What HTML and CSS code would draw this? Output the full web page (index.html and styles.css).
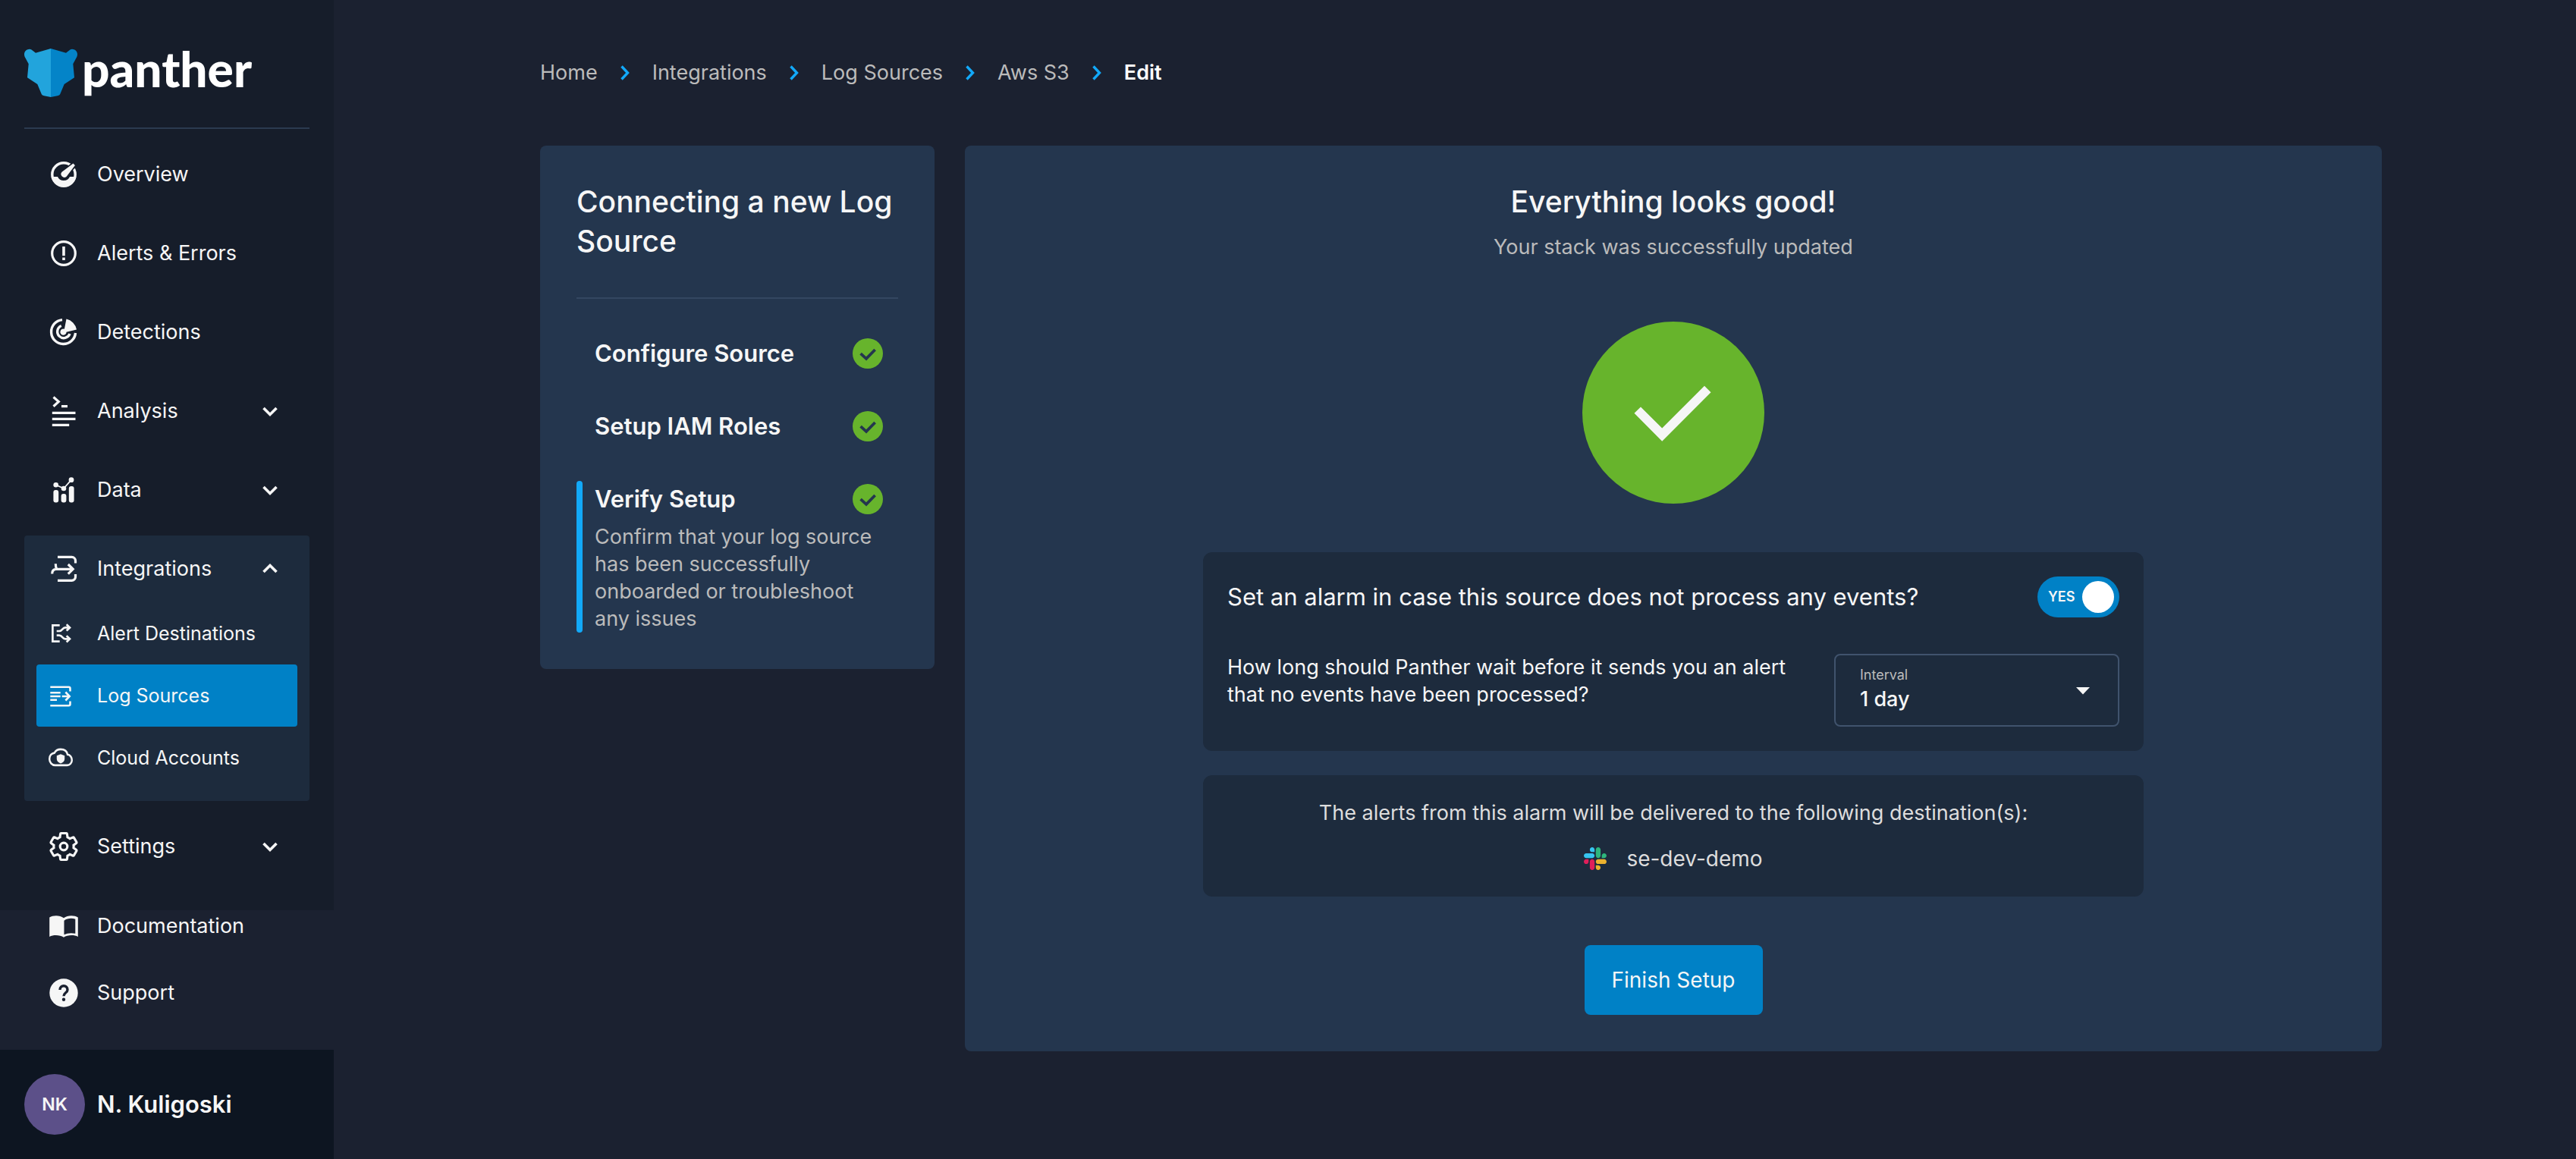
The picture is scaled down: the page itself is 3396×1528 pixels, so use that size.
FILE: index.html
```html
<!DOCTYPE html>
<html lang="en">
<head>
<meta charset="utf-8">
<meta name="viewport" content="width=device-width, initial-scale=1">
<title>Edit AWS S3 Log Source - Panther</title>
<link rel="stylesheet" href="styles.css">
</head>
<body>
<svg class="defs" aria-hidden="true">
  <symbol id="chevron" viewBox="0 0 24 24"><path d="M3.500 8 12 16.500 20.500 8" fill="none" stroke="currentColor" stroke-width="3.600"/></symbol>
  <symbol id="crumb" viewBox="0 0 14 20"><path d="M2.500 1.500 10.500 10 2.500 18.500" fill="none" stroke="currentColor" stroke-width="3.400"/></symbol>
  <symbol id="done" viewBox="0 0 40 40"><circle cx="20" cy="20" r="20" fill="#67b42c"/><path d="M10.600 20.200 18 26.800 29.600 15" fill="none" stroke="#24364e" stroke-width="3.800"/></symbol>
</svg>
<div class="app">
  <aside class="sidebar">
    <div class="sidebar-main">
      <a class="logo" href="#">
        <svg width="70" height="64" viewBox="0 0 70 64" aria-hidden="true">
          <path fill="#22a4dc" d="M35 0 15 5.700 9.500 1.500C6-.6 0 2.500 0 7.500c0 2 .5 3.200 1.400 4.800L5.700 20.300 4 38.300 17.300 47l5.200 12.500c.6 1.500 1.300 2.400 3.500 2.700L35 64z"/>
          <path fill="#0484c8" d="M35 0l20 5.700 5.500-4.200C64-.6 70 2.500 70 7.500c0 2-.5 3.200-1.400 4.800L64.300 20.300 66 38.300 52.700 47l-5.200 12.500c-.6 1.500-1.300 2.400-3.500 2.700L35 64z"/>
        </svg>
        <span>panther</span>
      </a>
      <nav class="nav" aria-label="Main">
        <a class="nav-item" href="#">
          <svg class="icon" viewBox="0 0 48 48"><circle cx="24" cy="24" r="15.200" fill="none" stroke="currentColor" stroke-width="3.400"/><path fill="currentColor" d="M7.500 27H16a8.500 7.500 0 0 0 16 0h8.500a17 17 0 0 1-33 0z"/><path d="M26 22 41 8" stroke="#161d2a" stroke-width="8"/><path fill="currentColor" d="M21.500 20.800 36.500 9.500l2.400 2.400-11.400 15a4.300 4.300 0 0 1-6-6.100z"/></svg>
          <span>Overview</span>
        </a>
        <a class="nav-item" href="#">
          <svg class="icon" viewBox="0 0 48 48"><circle cx="24" cy="24" r="15.300" fill="none" stroke="currentColor" stroke-width="3.200"/><path d="M24 15v12.200M24 29.600V33" stroke="currentColor" stroke-width="3.600"/></svg>
          <span>Alerts &amp; Errors</span>
        </a>
        <a class="nav-item" href="#">
          <svg class="icon" viewBox="0 0 48 48"><g fill="none" stroke="currentColor" stroke-width="3.400"><path d="M22 7.600A16 16 0 1 0 39.500 25"/><path d="M20.800 15.500A8.400 8.400 0 1 0 32 26"/></g><path fill="currentColor" d="M27.500 6.500A18 18 0 0 1 41 20.500L27.600 23.700a4.100 4.100 0 1 1-2.700-3.900z"/></svg>
          <span>Detections</span>
        </a>
        <button class="nav-item" type="button" aria-expanded="false">
          <svg class="icon" viewBox="0 0 48 48"><path d="M10.500 5.500 17.300 11.500 10.500 17.700M21 17.600h8M8.800 26.300h30.700M8.800 34.300h30.700M8.800 42.300h22.400" fill="none" stroke="currentColor" stroke-width="3.200"/></svg>
          <span>Analysis</span>
          <svg class="caret" viewBox="0 0 24 24"><use href="#chevron"/></svg>
        </button>
        <button class="nav-item" type="button" aria-expanded="false">
          <svg class="icon" viewBox="0 0 48 48"><path d="M13.700 17.300 24 22 34 10.700" fill="none" stroke="currentColor" stroke-width="1.800"/><g fill="currentColor"><circle cx="13.700" cy="17.300" r="3.300"/><circle cx="24" cy="22" r="3.300"/><circle cx="34" cy="10.700" r="3.400"/><rect x="10.400" y="24" width="6.800" height="16.500" rx="3"/><rect x="20.600" y="29" width="6.800" height="11.500" rx="3"/><rect x="30.800" y="19" width="6.800" height="21.500" rx="3"/></g></svg>
          <span>Data</span>
          <svg class="caret" viewBox="0 0 24 24"><use href="#chevron"/></svg>
        </button>
        <div class="nav-group">
          <button class="nav-item" type="button" aria-expanded="true">
            <svg class="icon" viewBox="0 0 48 48"><path d="M16 8.300h18.500a5 5 0 0 1 5 5v3.300M16 39.300h18.500a5 5 0 0 0 5-5V31M8.700 30.500c0-4 1.500-6.200 5.500-6.200H36M13.300 17.300c0 3 .2 5 1.500 7M29.800 18l6.400 6.300-6.400 6.400" fill="none" stroke="currentColor" stroke-width="3.200"/></svg>
            <span>Integrations</span>
            <svg class="caret caret-up" viewBox="0 0 24 24"><use href="#chevron"/></svg>
          </button>
          <a class="sub-item" href="#">
            <svg class="icon" viewBox="0 0 48 48"><path d="M22.700 13.300H13.400V34.700h9.300M18.700 21H22c4.500 0 4-4.600 8-4.600h6M18.700 26.700H22c4.500 0 4 4.600 8 4.600h6M31.700 12.300l4.300 4.100-4.300 4.100M31.700 27.200l4.300 4.100-4.300 4.100" fill="none" stroke="currentColor" stroke-width="2.700"/></svg>
            <span>Alert Destinations</span>
          </a>
          <a class="sub-item sub-item-active" href="#" aria-current="page">
            <svg class="icon" viewBox="0 0 48 48"><path d="M10.300 12.800h24.200a2 2 0 0 1 2 2v3.700M10.300 37.200h24.200a2 2 0 0 0 2-2v-3.700M10.300 20.300h13.400M10.300 25h13.400M10.300 29.700H19M25.700 25H36M30.400 19.500l5.300 5.500-5.300 5.500" fill="none" stroke="currentColor" stroke-width="2.600"/></svg>
            <span>Log Sources</span>
          </a>
          <a class="sub-item" href="#">
            <svg class="icon" viewBox="0 0 48 48"><path transform="translate(9.200 6.200) scale(1.233 1.350)" d="M19.350 10.040C18.670 6.590 15.640 5 12 5 9.110 5 6.600 6.240 5.350 8.440 2.340 8.760 0 10.910 0 14.500c0 3.310 2.690 6 6 6h13c2.760 0 5-2.240 5-5 0-2.640-2.050-5.280-4.650-5.460z" fill="none" stroke="currentColor" stroke-width="2"/><path fill="currentColor" d="M24 19.300l5.200 2v4.200c0 3-2.200 5-5.200 6.100-3-1.100-5.200-3.100-5.200-6.100v-4.200z"/></svg>
            <span>Cloud Accounts</span>
          </a>
        </div>
        <button class="nav-item" type="button" aria-expanded="false">
          <svg class="icon" viewBox="0 0 48 48"><path transform="translate(3 3) scale(1.750)" fill="none" stroke="currentColor" stroke-width="1.800" d="M19.430 12.980c.04-.32.07-.64.07-.98 0-.34-.03-.66-.07-.98l2.110-1.650c.19-.15.24-.42.12-.64l-2-3.460c-.09-.16-.26-.25-.44-.25-.06 0-.12.010-.17.030l-2.490 1c-.52-.4-1.080-.73-1.690-.98l-.38-2.650C14.460 2.180 14.250 2 14 2h-4c-.25 0-.46.18-.49.42l-.38 2.650c-.61.25-1.170.59-1.690.98l-2.490-1c-.06-.02-.12-.03-.18-.03-.17 0-.34.09-.43.25l-2 3.460c-.13.22-.07.49.12.64l2.110 1.650c-.04.32-.07.65-.07.98 0 .33.030.66.070.98l-2.110 1.650c-.19.15-.24.42-.12.64l2 3.460c.09.16.26.25.44.25.06 0 .12-.01.17-.03l2.490-1c.52.4 1.080.73 1.690.98l.38 2.650c.03.24.24.42.49.42h4c.25 0 .46-.18.49-.42l.38-2.650c.61-.25 1.170-.59 1.690-.98l2.490 1c.06.020.12.030.18.030.17 0 .34-.09.43-.25l2-3.460c.12-.22.07-.49-.12-.64z"/><circle cx="24" cy="24" r="4.800" fill="none" stroke="currentColor" stroke-width="3.200"/></svg>
          <span>Settings</span>
          <svg class="caret" viewBox="0 0 24 24"><use href="#chevron"/></svg>
        </button>
      </nav>
    </div>
    <nav class="help" aria-label="Help">
      <a class="nav-item help-item" href="#">
        <svg class="icon" viewBox="0 0 48 48"><path fill="currentColor" fill-rule="evenodd" d="M24 13.200C19 9.400 10 9.400 5.200 12.500V38C10 35.300 19 35.300 24 38.800 29 35.300 38 35.300 42.800 38V12.500C38 9.400 29 9.400 24 13.200zM24.500 16.700C29 13.400 35 13.300 39.300 14.800V33.800C34.500 32.600 28.500 33 24.500 35.300z"/></svg>
        <span>Documentation</span>
      </a>
      <a class="nav-item help-item" href="#">
        <svg class="icon" viewBox="0 0 48 48"><circle cx="24" cy="24" r="18.700" fill="currentColor"/><path d="M19 20c0-7 10-7 10 0 0 3.700-5 4-5 8.200" fill="none" stroke="#1b2130" stroke-width="3.400"/><circle cx="24" cy="32.800" r="2.200" fill="#1b2130"/></svg>
        <span>Support</span>
      </a>
    </nav>
    <div class="user">
      <span class="avatar">NK</span>
      <span class="user-name">N. Kuligoski</span>
    </div>
  </aside>

  <main class="content">
    <nav class="breadcrumbs" aria-label="Breadcrumb">
      <a href="#">Home</a>
      <svg class="crumb" viewBox="0 0 14 20"><use href="#crumb"/></svg>
      <a href="#">Integrations</a>
      <svg class="crumb" viewBox="0 0 14 20"><use href="#crumb"/></svg>
      <a href="#">Log Sources</a>
      <svg class="crumb" viewBox="0 0 14 20"><use href="#crumb"/></svg>
      <a href="#">Aws S3</a>
      <svg class="crumb" viewBox="0 0 14 20"><use href="#crumb"/></svg>
      <a class="current" href="#" aria-current="page">Edit</a>
    </nav>

    <div class="wizard">
      <section class="card steps">
        <h2 class="title steps-title">Connecting a new Log Source</h2>
        <ol class="step-list">
          <li class="step">
            <div class="step-head"><span>Configure Source</span><svg class="done" viewBox="0 0 40 40"><use href="#done"/></svg></div>
          </li>
          <li class="step">
            <div class="step-head"><span>Setup IAM Roles</span><svg class="done" viewBox="0 0 40 40"><use href="#done"/></svg></div>
          </li>
          <li class="step step-active">
            <div class="step-head"><span>Verify Setup</span><svg class="done" viewBox="0 0 40 40"><use href="#done"/></svg></div>
            <p class="step-text">Confirm that your log source has been successfully onboarded or troubleshoot any issues</p>
          </li>
        </ol>
      </section>

      <section class="card result">
        <h1 class="title">Everything looks good!</h1>
        <p class="subtitle">Your stack was successfully updated</p>
        <svg class="success" viewBox="0 0 240 240" aria-hidden="true"><circle cx="120" cy="120" r="120" fill="#67b42c"/><path fill="#f6f6f6" d="M68.500 120.700 77 112.500 105.200 140.500 161 84.700 169.500 93.200 105.200 157.700z"/></svg>

        <div class="panel alarm">
          <div class="alarm-row">
            <label class="alarm-title" for="alarm">Set an alarm in case this source does not process any events?</label>
            <span class="switch">
              <input id="alarm" type="checkbox" checked>
              <span class="switch-text" aria-hidden="true">YES</span>
            </span>
          </div>
          <div class="alarm-row alarm-row-top">
            <p class="alarm-text">How long should Panther wait before it sends you an alert that no events have been processed?</p>
            <div class="field">
              <label for="interval">Interval</label>
              <select id="interval"><option>1 day</option></select>
              <svg class="field-caret" viewBox="0 0 18 10" aria-hidden="true"><path fill="#f6f6f6" d="M0 0h18L9 9.500z"/></svg>
            </div>
          </div>
        </div>

        <div class="panel destinations">
          <p>The alerts from this alarm will be delivered to the following destination(s):</p>
          <div class="destination">
            <svg class="slack" viewBox="0 0 123 123" aria-hidden="true">
              <path fill="#e01e5a" d="M25.800 77.600c0 7.100-5.800 12.900-12.900 12.900S0 84.700 0 77.600s5.800-12.900 12.900-12.900h12.900zM32.300 77.600c0-7.100 5.800-12.900 12.900-12.900s12.900 5.800 12.900 12.900v32.300c0 7.100-5.800 12.900-12.900 12.900s-12.900-5.800-12.900-12.900z"/>
              <path fill="#36c5f0" transform="rotate(90 61.400 61.400)" d="M25.800 77.600c0 7.100-5.800 12.900-12.900 12.900S0 84.700 0 77.600s5.800-12.900 12.900-12.900h12.900zM32.300 77.600c0-7.100 5.800-12.900 12.900-12.900s12.900 5.800 12.900 12.900v32.300c0 7.100-5.800 12.900-12.900 12.900s-12.900-5.800-12.900-12.900z"/>
              <path fill="#2eb67d" transform="rotate(180 61.400 61.400)" d="M25.800 77.600c0 7.100-5.800 12.900-12.900 12.900S0 84.700 0 77.600s5.800-12.900 12.900-12.900h12.900zM32.300 77.600c0-7.100 5.800-12.900 12.900-12.900s12.900 5.800 12.900 12.900v32.300c0 7.100-5.800 12.900-12.900 12.900s-12.900-5.800-12.900-12.900z"/>
              <path fill="#ecb22e" transform="rotate(270 61.400 61.400)" d="M25.800 77.600c0 7.100-5.800 12.900-12.900 12.900S0 84.700 0 77.600s5.800-12.900 12.900-12.900h12.900zM32.300 77.600c0-7.100 5.800-12.900 12.900-12.900s12.900 5.800 12.900 12.900v32.300c0 7.100-5.800 12.900-12.900 12.900s-12.900-5.800-12.900-12.900z"/>
            </svg>
            <span>se-dev-demo</span>
          </div>
        </div>

        <button class="finish" type="button">Finish Setup</button>
      </section>
    </div>
  </main>
</div>
</body>
</html>
```
FILE: styles.css
```css
* {
  box-sizing: border-box;
}

body {
  margin: 0;
  background: #1b2130;
  color: #f6f6f6;
  font: 400 27px/36px Inter, sans-serif;
}

h1, h2, p, ol {
  margin: 0;
  padding: 0;
}

a {
  color: inherit;
  text-decoration: none;
}

button, select {
  border: 0;
  background: none;
  color: inherit;
  font: inherit;
  cursor: pointer;
}

.defs {
  display: none;
}

.app {
  display: flex;
  min-height: 100vh;
}

/* Sidebar */

.sidebar {
  flex: 0 0 440px;
  display: flex;
  flex-direction: column;
}

.sidebar-main {
  flex: 1;
  padding: 64px 32px 40px;
  background: #161d2a;
}

.logo {
  display: flex;
  gap: 6px;
  height: 106px;
  border-bottom: 2px solid #2b3a50;
  color: #fff;
  font: 900 64px/54px Lato, sans-serif;
}

.nav {
  display: flex;
  flex-direction: column;
  gap: 16px;
  padding-top: 16px;
}

.nav-item {
  display: flex;
  align-items: center;
  gap: 20px;
  width: 100%;
  height: 88px;
  padding: 0 40px 0 28px;
  text-align: left;
}

.icon {
  flex: none;
  width: 48px;
  height: 48px;
}

.caret {
  width: 24px;
  height: 24px;
  margin-left: auto;
}

.caret-up {
  transform: rotate(180deg);
}

.nav-group {
  padding-bottom: 16px;
  border-radius: 4px;
  background: #1d2b3d;
}

.sub-item {
  display: flex;
  align-items: center;
  gap: 24px;
  height: 82px;
  margin: 0 16px;
  padding: 0 8px;
  border-radius: 4px;
  font-size: 25px;
}

.sub-item-active {
  background: #0081c6;
}

.help {
  display: flex;
  flex-direction: column;
  gap: 46px;
  padding: 0 32px 54px;
}

.help-item {
  height: 42px;
}

.user {
  display: flex;
  align-items: center;
  gap: 16px;
  padding: 32px;
  background: #0d1521;
}

.avatar {
  display: grid;
  place-items: center;
  width: 80px;
  height: 80px;
  border-radius: 50%;
  background: #5c5089;
  font-size: 23px;
  font-weight: 600;
}

.user-name {
  font-size: 31px;
  font-weight: 600;
}

/* Content */

.content {
  flex: 1;
  min-width: 0;
  padding: 78px 256px 64px 272px;
}

.breadcrumbs {
  display: flex;
  align-items: center;
  gap: 29px;
  margin-bottom: 78px;
  color: #bbb;
}

.breadcrumbs .current {
  color: #fff;
  font-weight: 600;
}

.crumb {
  width: 14px;
  height: 20px;
  color: #12a9f9;
}

.wizard {
  display: grid;
  grid-template-columns: 520px 1fr;
  align-items: start;
  gap: 40px;
}

.card {
  padding: 48px;
  border-radius: 8px;
  background: #24364e;
}

.title {
  font-size: 39px;
  font-weight: 500;
  line-height: 52px;
}

.steps-title {
  padding-bottom: 48px;
  border-bottom: 2px solid #344761;
}

.step-list {
  display: flex;
  flex-direction: column;
  gap: 48px;
  padding-top: 48px;
  list-style: none;
}

.step {
  position: relative;
  padding: 0 20px 0 24px;
}

.step-active::before {
  content: "";
  position: absolute;
  top: 0;
  bottom: 0;
  left: 0;
  width: 8px;
  border-radius: 4px;
  background: #12a9f9;
}

.step-head {
  display: flex;
  align-items: center;
  justify-content: space-between;
  height: 48px;
  font-size: 31px;
  font-weight: 600;
}

.done {
  width: 40px;
  height: 40px;
}

.step-text {
  padding-top: 8px;
  color: #bbb;
}

.result {
  display: flex;
  flex-direction: column;
  align-items: center;
}

.subtitle {
  margin-top: 16px;
  color: #bbb;
}

.success {
  width: 240px;
  height: 240px;
  margin: 80px 0 64px;
}

.panel {
  width: 100%;
  max-width: 1240px;
  padding: 32px;
  border-radius: 12px;
  background: #1d2b3d;
}

.alarm {
  display: flex;
  flex-direction: column;
  gap: 48px;
}

.alarm-row {
  display: flex;
  align-items: center;
  justify-content: space-between;
  gap: 48px;
}

.alarm-row-top {
  align-items: flex-start;
}

.alarm-title {
  font-size: 31px;
}

.alarm-text {
  flex: 1;
}

.switch {
  position: relative;
  display: flex;
}

.switch input {
  appearance: none;
  width: 108px;
  height: 54px;
  margin: 0;
  border-radius: 27px;
  background: #0081c6;
  cursor: pointer;
}

.switch input::after {
  content: "";
  display: block;
  width: 42px;
  height: 42px;
  margin: 6px 7px 0 auto;
  border-radius: 50%;
  background: #fff;
}

.switch-text {
  position: absolute;
  top: 0;
  left: 14px;
  font-size: 18px;
  font-weight: 600;
  line-height: 54px;
  pointer-events: none;
}

.field {
  position: relative;
  display: flex;
  flex-direction: column;
  gap: 2px;
  width: 376px;
  padding: 14px 32px 16px;
  border: 2px solid #40536d;
  border-radius: 8px;
}

.field label {
  color: #bbb;
  font-size: 18px;
  line-height: 24px;
}

.field select {
  appearance: none;
  height: 36px;
  padding: 0;
  font-weight: 500;
}

.field-caret {
  position: absolute;
  top: 42px;
  right: 37px;
  width: 18px;
  height: 10px;
  pointer-events: none;
}

.destinations {
  display: flex;
  flex-direction: column;
  align-items: center;
  gap: 24px;
  margin: 32px 0 64px;
  color: #ddd;
}

.destination {
  display: flex;
  align-items: center;
  gap: 26px;
  font-size: 28px;
}

.slack {
  width: 30px;
  height: 30px;
}

.finish {
  height: 92px;
  padding: 0 36px;
  border-radius: 8px;
  background: #0081c6;
  font-size: 28px;
}
```
